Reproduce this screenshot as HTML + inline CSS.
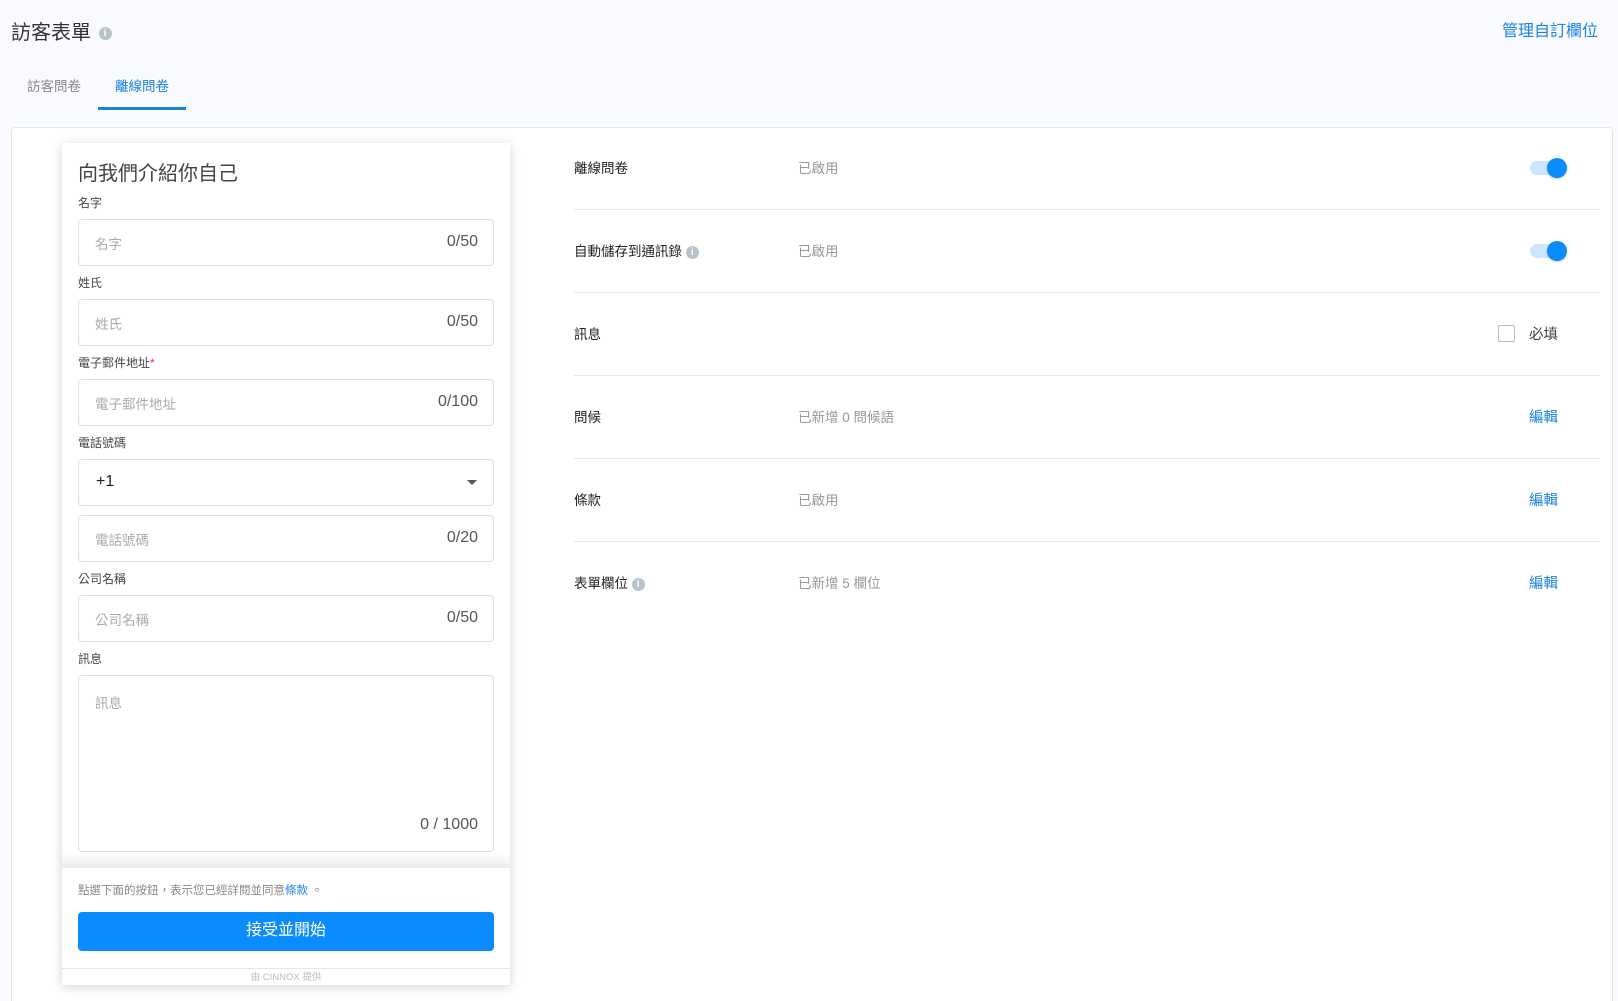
<!DOCTYPE html>
<html style="height:1001px;overflow:hidden"><head><meta charset="utf-8"><style>
*{box-sizing:border-box;margin:0;padding:0}
body{width:1618px;height:1001px;background:#f8fafd;font-family:"Liberation Sans","Noto Sans CJK TC",sans-serif;position:relative;overflow:hidden;color:#333}
.a{position:absolute;white-space:nowrap}
.info{display:inline-block;width:13px;height:13px;border-radius:50%;background:#b9c2ca;color:#fff;font-size:10px;line-height:13px;text-align:center;font-weight:bold;vertical-align:middle}
.card{position:absolute;left:11px;top:127px;width:1602px;height:874px;background:#fff;border:1px solid #e2e5e9;border-bottom:none;border-radius:4px 4px 0 0}
.form{position:absolute;left:62px;top:143px;width:448px;height:842px;background:#fff;box-shadow:0 2px 10px rgba(0,0,0,.18)}
.lbl{position:absolute;left:16px;font-size:12px;color:#444}
.inp{position:absolute;left:16px;width:416px;height:47px;border:1px solid #dcdfe3;border-radius:4px}
.ph{position:absolute;left:16px;top:13px;font-size:13.5px;color:#aaa}
.cnt{position:absolute;right:15px;top:13px;font-size:16px;color:#555}
.row{position:absolute;left:574px;width:1026px;height:1px;background:#e5e7ea}
.rl{position:absolute;left:574px;font-size:13.5px;color:#222}
.rv{position:absolute;left:798px;font-size:13.5px;color:#999}
.tg{position:absolute;left:1530px;width:38px;height:20px}
.tg:before{content:"";position:absolute;left:0;top:3px;width:34px;height:14px;border-radius:7px;background:#cde6fd}
.tg:after{content:"";position:absolute;left:17px;top:0;width:20px;height:20px;border-radius:50%;background:#0a8cff;box-shadow:0 1px 2px rgba(0,0,0,.2)}
.ed{position:absolute;left:1529px;font-size:14.5px;color:#1a83e0}
</style></head><body>
<div class="a" style="left:11px;top:16px;font-size:20px;color:#333">訪客表單 <span class="info" style="margin-left:2px">i</span></div>
<div class="a" style="left:1502px;top:17px;font-size:16px;color:#1a83e0">管理自訂欄位</div>
<div class="a" style="left:27px;top:75px;font-size:13.5px;color:#888">訪客問卷</div>
<div class="a" style="left:115px;top:75px;font-size:13.5px;color:#1a83e0">離線問卷</div>
<div class="a" style="left:98px;top:107px;width:88px;height:3px;background:#1a83e0"></div>
<div class="card"></div>
<div class="form">
 <div class="a" style="left:16px;top:14px;font-size:20px;color:#444">向我們介紹你自己</div>
 <div class="lbl" style="top:51px">名字</div>
 <div class="inp" style="top:76px"><span class="ph">名字</span><span class="cnt">0/50</span></div>
 <div class="lbl" style="top:131px">姓氏</div>
 <div class="inp" style="top:156px"><span class="ph">姓氏</span><span class="cnt">0/50</span></div>
 <div class="lbl" style="top:211px">電子郵件地址<span style="color:#e33">*</span></div>
 <div class="inp" style="top:236px"><span class="ph">電子郵件地址</span><span class="cnt">0/100</span></div>
 <div class="lbl" style="top:291px">電話號碼</div>
 <div class="inp" style="top:316px"><span class="a" style="left:17px;top:13px;font-size:16px;color:#222">+1</span><span class="a" style="right:16px;top:20px;border-left:5px solid transparent;border-right:5px solid transparent;border-top:5px solid #555"></span></div>
 <div class="inp" style="top:372px"><span class="ph">電話號碼</span><span class="cnt">0/20</span></div>
 <div class="lbl" style="top:427px">公司名稱</div>
 <div class="inp" style="top:452px"><span class="ph">公司名稱</span><span class="cnt">0/50</span></div>
 <div class="lbl" style="top:507px">訊息</div>
 <div class="inp" style="top:532px;height:177px"><span class="ph" style="top:16px">訊息</span><span class="cnt" style="top:140px">0 / 1000</span></div>
 <div class="a" style="left:0;top:710px;width:448px;height:15px;background:linear-gradient(#fff,#ececec)"></div>
 <div class="a" style="left:16px;top:739px;font-size:11.5px;color:#888">點選下面的按鈕，表示您已經詳閱並同意<span style="color:#1a83e0">條款</span> 。</div>
 <div class="a" style="left:16px;top:769px;width:416px;height:39px;background:#0a8cff;border-radius:4px;color:#fff;font-size:16px;text-align:center;line-height:37px">接受並開始</div>
 <div class="a" style="left:0;top:825px;width:448px;height:1px;background:#e5e5e5"></div>
 <div class="a" style="left:0;top:826px;width:448px;text-align:center;font-size:9.5px;color:#bbb">由 CINNOX 提供</div>
</div>
<div class="rl" style="top:157px">離線問卷</div><div class="rv" style="top:157px">已啟用</div><div class="tg" style="top:158px"></div>
<div class="row" style="top:209px"></div>
<div class="rl" style="top:240px">自動儲存到通訊錄 <span class="info">i</span></div><div class="rv" style="top:240px">已啟用</div><div class="tg" style="top:241px"></div>
<div class="row" style="top:292px"></div>
<div class="rl" style="top:323px">訊息</div>
<div class="a" style="left:1498px;top:325px;width:17px;height:17px;border:1.5px solid #bbb;border-radius:2px"></div>
<div class="a" style="left:1529px;top:323px;font-size:14.5px;color:#444">必填</div>
<div class="row" style="top:375px"></div>
<div class="rl" style="top:406px">問候</div><div class="rv" style="top:406px">已新增 0 問候語</div><div class="ed" style="top:406px">編輯</div>
<div class="row" style="top:458px"></div>
<div class="rl" style="top:489px">條款</div><div class="rv" style="top:489px">已啟用</div><div class="ed" style="top:489px">編輯</div>
<div class="row" style="top:541px"></div>
<div class="rl" style="top:572px">表單欄位 <span class="info">i</span></div><div class="rv" style="top:572px">已新增 5 欄位</div><div class="ed" style="top:572px">編輯</div>
</body></html>
